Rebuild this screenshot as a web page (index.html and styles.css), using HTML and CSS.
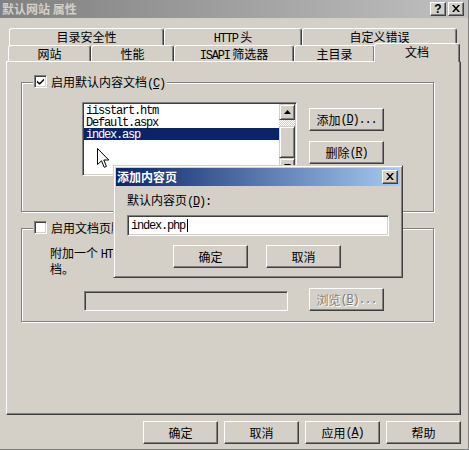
FILE: index.html
```html
<!DOCTYPE html>
<html lang="zh">
<head>
<meta charset="utf-8">
<title>默认网站 属性</title>
<link rel="stylesheet" href="styles.css">
</head>
<body>
<div class="win">
  <div class="titlebar">
    <span class="title">默认网站 属性</span>
    <span class="capbtn q">?</span>
    <span class="capbtn"><svg width="8" height="7" viewBox="0 0 8 7"><path d="M0 0h2l2 2.4 2-2.4h2l-3 3.5 3 3.5h-2l-2-2.4-2 2.4h-2l3-3.5z" fill="#000"/></svg></span>
  </div>

  <div class="tabs">
    <div class="row row1">
      <div class="tab w155">目录安全性</div>
      <div class="tab w138"><span class="en">HTTP</span> 头</div>
      <div class="tab w155">自定义错误</div>
    </div>
    <div class="row row2">
      <div class="tab w83">网站</div>
      <div class="tab w83">性能</div>
      <div class="tab w120"><span class="en">ISAPI</span> 筛选器</div>
      <div class="tab w81">主目录</div>
      <div class="tab sel w86">文档</div>
    </div>
  </div>

  <div class="panel">
    <fieldset class="group g1">
      <legend><span class="chk"><svg width="9" height="9" viewBox="0 0 9 9"><path d="M1 3.5v2l2 2h1l4-4v-2l-4 4h-1z" fill="#000"/></svg></span>启用默认内容文档<span class="en">(<u>C</u>)</span></legend>
      <div class="g1body">
        <div class="listbox">
          <ul class="items">
            <li>iisstart.htm</li>
            <li>Default.aspx</li>
            <li class="selitem">index.asp</li>
          </ul>
          <div class="vscroll">
            <div class="sbtn"><svg width="7" height="4" viewBox="0 0 7 4"><path d="M3.5 0L7 4H0z" fill="#000"/></svg></div>
            <div class="track"></div>
            <div class="sbtn thumb"></div>
            <div class="sbtn"><svg width="7" height="4" viewBox="0 0 7 4"><path d="M0 0h7L3.5 4z" fill="#000"/></svg></div>
          </div>
        </div>
        <div class="btncol">
          <button type="button" class="btn">添加<span class="en">(<u>D</u>)...</span></button>
          <button type="button" class="btn">删除<span class="en">(<u>R</u>)</span></button>
        </div>
      </div>
    </fieldset>

    <fieldset class="group g2">
      <legend><span class="chk"></span>启用文档页脚<span class="en">(<u>O</u>)</span></legend>
      <p class="desc">附加一个 <span class="en">HTML</span> 格式的页脚到您的 <span class="en">Web</span> 服务器返回的每一个文<br>档。</p>
      <div class="browse-row">
        <div class="field off"></div>
        <button type="button" class="btn dis">浏览<span class="en">(<u>B</u>)...</span></button>
      </div>
    </fieldset>
  </div>

  <div class="footer">
    <button type="button" class="btn">确定</button>
    <button type="button" class="btn">取消</button>
    <button type="button" class="btn">应用<span class="en">(<u>A</u>)</span></button>
    <button type="button" class="btn">帮助</button>
  </div>
</div>

<div class="dialog">
  <div class="dtitle">
    <span class="dtext">添加内容页</span>
    <span class="capbtn"><svg width="8" height="7" viewBox="0 0 8 7"><path d="M0 0h2l2 2.4 2-2.4h2l-3 3.5 3 3.5h-2l-2-2.4-2 2.4h-2l3-3.5z" fill="#000"/></svg></span>
  </div>
  <div class="dlabel">默认内容页<span class="en">(<u>D</u>):</span></div>
  <div class="field dinput"><span class="val">index.php</span><span class="caret"></span></div>
  <div class="dbtns">
    <button type="button" class="btn">确定</button>
    <button type="button" class="btn">取消</button>
  </div>
</div>

<svg class="cursor" width="13" height="21" viewBox="0 0 13 21"><path d="M0.5 0.5V16.5L4.5 12.8L7.2 19.3L9.4 18.4L6.8 12H11.8Z" fill="#fff" stroke="#000" stroke-width="1" stroke-linejoin="miter"/></svg>
</body>
</html>
```

FILE: styles.css
```css
* { box-sizing: border-box; }
html, body { margin: 0; padding: 0; }
body {
  width: 469px;
  height: 450px;
  overflow: hidden;
  position: relative;
  background: #d4d0c8;
  color: #000;
  font-family: "Noto Sans CJK SC", sans-serif;
  font-size: 12px;
}
.en {
  font-family: "Liberation Mono", monospace;
  font-size: 12px;
  letter-spacing: -1.2px;
}
u { text-decoration: underline; }

.win {
  width: 469px;
  height: 450px;
  border-right: 1px solid #808080;
  border-bottom: 1px solid #808080;
}

/* caption */
.titlebar {
  height: 18px;
  display: flex;
  align-items: center;
  padding: 0 4px 0 2px;
  background: linear-gradient(to right, #808080, #c0c0c0);
}
.title {
  flex: 1;
  font-weight: bold;
  color: #d4d0c8;
  line-height: 18px;
}
.capbtn {
  width: 16px;
  height: 14px;
  margin-left: 2px;
  background: #d4d0c8;
  border: 1px solid;
  border-color: #fff #404040 #404040 #fff;
  box-shadow: inset -1px -1px #808080;
  display: flex;
  align-items: center;
  justify-content: center;
  padding-bottom: 1px;
}
.capbtn.q {
  font-family: "Liberation Sans", sans-serif;
  font-weight: bold;
  font-size: 12px;
  line-height: 12px;
}

/* tabs */
.tabs { margin-top: 10px; height: 33px; }
.row { display: flex; align-items: flex-start; }
.row1 { height: 17px; padding-left: 9px; }
.row2 { height: 16px; padding-left: 8px; }
.tab {
  height: 100%;
  background: #d4d0c8;
  border: 1px solid;
  border-bottom: 0;
  border-color: #fff #404040 transparent #fff;
  box-shadow: inset -1px 0 #808080;
  border-radius: 3px 3px 0 0;
  text-align: center;
  white-space: nowrap;
}
.row1 .tab { line-height: 16px; }
.row2 .tab { line-height: 15px; }
.w155 { width: 155px; }
.w138 { width: 138px; }
.w83 { width: 83px; }
.w120 { width: 120px; }
.w81 { width: 81px; }
.w86 { width: 86px; }
.row2 .tab.sel {
  position: relative;
  z-index: 1;
  height: 19px;
  margin-top: -2px;
  margin-left: -1px;
  line-height: 16px;
}

/* page */
.panel {
  margin-left: 6px;
  width: 455px;
  height: 354px;
  border: 1px solid;
  border-color: #fff #404040 #404040 #fff;
  box-shadow: inset -1px -1px #808080;
}
.group {
  margin: 0 0 0 14px;
  padding: 0;
  width: 413px;
  min-width: 0;
  border: 1px solid #808080;
  box-shadow: inset 1px 1px #fff, 1px 1px #fff;
}
.g1 { margin-top: 13px; height: 137px; }
.g2 { margin-top: 9px; height: 101px; }
legend {
  margin-left: 11px;
  padding: 0 2px 0 1px;
  height: 14px;
  line-height: 14px;
  background: #d4d0c8;
  white-space: nowrap;
}
.chk {
  display: inline-block;
  vertical-align: top;
  width: 13px;
  height: 13px;
  margin-right: 4px;
  background: #fff;
  border: 1px solid;
  border-color: #808080 #fff #fff #808080;
  box-shadow: inset 1px 1px #404040, inset -1px -1px #d4d0c8;
  padding: 1px;
}
.chk svg { display: block; }

.g1body {
  display: flex;
  align-items: flex-start;
  margin: 13px 0 0 60px;
}
.listbox {
  width: 215px;
  height: 74px;
  display: flex;
  padding: 1px;
  background: #fff;
  border: 1px solid;
  border-color: #808080 #fff #fff #808080;
  box-shadow: inset 1px 1px #404040, inset -1px -1px #d4d0c8;
}
.items {
  flex: 1;
  list-style: none;
  margin: 0;
  padding: 0;
  font-family: "Liberation Mono", monospace;
  font-size: 12px;
  letter-spacing: -1.2px;
}
.items li { height: 12px; line-height: 14px; padding-left: 2px; }
.items .selitem { background: #0a246a; color: #fff; }
.vscroll { width: 16px; display: flex; flex-direction: column; }
.sbtn {
  height: 16px;
  background: #d4d0c8;
  border: 1px solid;
  border-color: #d4d0c8 #404040 #404040 #d4d0c8;
  box-shadow: inset 1px 1px #fff, inset -1px -1px #808080;
  display: flex;
  align-items: center;
  justify-content: center;
}
.sbtn svg { display: block; }
.track {
  height: 6px;
  background: repeating-conic-gradient(#fff 0 25%, #d4d0c8 0 50%) 0 0 / 2px 2px;
}
.sbtn.thumb { height: 32px; }

.btn {
  width: 75px;
  height: 23px;
  padding: 0;
  margin: 0;
  background: #d4d0c8;
  color: #000;
  font: inherit;
  line-height: 16px;
  border: 1px solid;
  border-color: #fff #404040 #404040 #fff;
  box-shadow: inset -1px -1px #808080;
  display: flex;
  align-items: center;
  justify-content: center;
  white-space: nowrap;
}
.btn.dis { color: #808080; text-shadow: 1px 1px #fff; }
.btncol {
  display: flex;
  flex-direction: column;
  gap: 10px;
  margin: 6px 0 0 12px;
}

.desc { margin: 11px 0 0 28px; line-height: 13px; }
.browse-row {
  display: flex;
  align-items: flex-start;
  margin: 13px 0 0 62px;
}
.field {
  border: 1px solid;
  border-color: #808080 #fff #fff #808080;
  box-shadow: inset 1px 1px #404040, inset -1px -1px #d4d0c8;
}
.field.off { width: 204px; height: 20px; margin-top: 3px; margin-right: 21px; background: #d4d0c8; }

.footer {
  display: flex;
  justify-content: flex-end;
  gap: 6px;
  padding-right: 7px;
  margin-top: 6px;
}

/* modal dialog */
.dialog {
  position: absolute;
  left: 113px;
  top: 165px;
  width: 290px;
  height: 113px;
  padding: 2px;
  background: #d4d0c8;
  border: 1px solid;
  border-color: #d4d0c8 #404040 #404040 #d4d0c8;
  box-shadow: inset 1px 1px #fff, inset -1px -1px #808080;
}
.dtitle {
  height: 18px;
  display: flex;
  align-items: center;
  padding: 0 2px 0 1px;
  background: linear-gradient(to right, #0a246a, #a6caf0);
}
.dtext { flex: 1; color: #fff; font-weight: bold; line-height: 18px; }
.dlabel { margin: 7px 0 0 11px; line-height: 14px; }
.dinput {
  margin: 6px 0 0 11px;
  width: 262px;
  height: 21px;
  background: #fff;
  padding: 0 0 0 3px;
  display: flex;
  align-items: center;
  font-family: "Liberation Mono", monospace;
  font-size: 12px;
  letter-spacing: -1.2px;
}
.caret { display: inline-block; width: 1px; height: 13px; background: #000; margin-left: 2px; }
.dbtns {
  display: flex;
  gap: 18px;
  margin: 9px 0 0 57px;
}

.cursor { position: absolute; left: 97px; top: 148px; display: block; }
```
